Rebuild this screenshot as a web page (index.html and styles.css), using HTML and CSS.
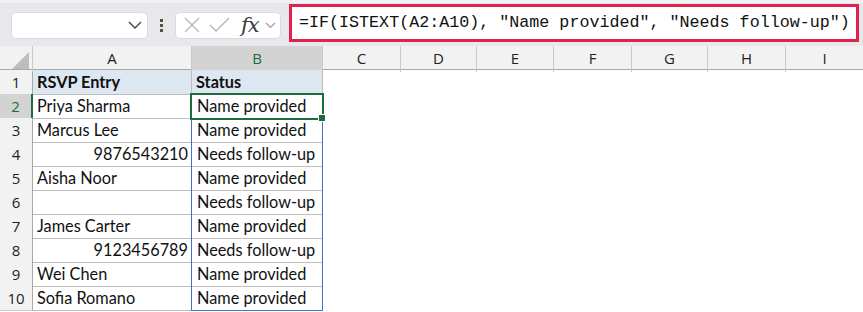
FILE: index.html
```html
<!DOCTYPE html>
<html lang="en">
<head>
    <meta charset="UTF-8">
    <title>RSVP Status</title>
    <link rel="stylesheet" href="styles.css">
</head>
<body>
<div class="toolbar">
    <div class="nameBox">
        <svg class="chev" width="14" height="8" viewBox="0 0 14 8"><path d="M1 1 L7 7 L13 1" fill="none" stroke="#444" stroke-width="1.4"/></svg>
    </div>
    <div class="dots"><span></span><span></span><span></span></div>
    <div class="fxBox">
        <svg width="18" height="18" viewBox="0 0 18 18"><path d="M2 2 L16 16 M16 2 L2 16" stroke="#b5b5b5" stroke-width="1.3" fill="none"/></svg>
        <svg width="21" height="16" viewBox="0 0 21 16"><path d="M1 8 L7 14 L20 1" stroke="#b5b5b5" stroke-width="1.3" fill="none"/></svg>
        <span class="fx">fx</span>
        <svg width="11" height="7" viewBox="0 0 11 7"><path d="M1 1 L5.5 5.5 L10 1" fill="none" stroke="#999" stroke-width="1.2"/></svg>
    </div>
    <div class="formula">=IF(ISTEXT(A2:A10), "Name provided", "Needs follow-up")</div>
</div>
<div class="sheet">
    <div class="row head">
        <div class="corner"><span class="tri"></span></div>
        <div class="colHead">A</div>
        <div class="colHead sel">B</div>
        <div class="colHead">C</div>
        <div class="colHead">D</div>
        <div class="colHead">E</div>
        <div class="colHead">F</div>
        <div class="colHead">G</div>
        <div class="colHead">H</div>
        <div class="colHead last">I</div>
    </div>
    <div class="row">
        <div class="rowHead">1</div>
        <div class="cell title">RSVP Entry</div>
        <div class="cell title b">Status</div>
    </div>
    <div class="row">
        <div class="rowHead sel">2</div>
        <div class="cell">Priya Sharma</div>
        <div class="cell b range active">Name provided</div>
    </div>
    <div class="row">
        <div class="rowHead">3</div>
        <div class="cell">Marcus Lee</div>
        <div class="cell b range">Name provided</div>
    </div>
    <div class="row">
        <div class="rowHead">4</div>
        <div class="cell num">9876543210</div>
        <div class="cell b range">Needs follow-up</div>
    </div>
    <div class="row">
        <div class="rowHead">5</div>
        <div class="cell">Aisha Noor</div>
        <div class="cell b range">Name provided</div>
    </div>
    <div class="row">
        <div class="rowHead">6</div>
        <div class="cell"></div>
        <div class="cell b range">Needs follow-up</div>
    </div>
    <div class="row">
        <div class="rowHead">7</div>
        <div class="cell">James Carter</div>
        <div class="cell b range">Name provided</div>
    </div>
    <div class="row">
        <div class="rowHead">8</div>
        <div class="cell num">9123456789</div>
        <div class="cell b range">Needs follow-up</div>
    </div>
    <div class="row">
        <div class="rowHead">9</div>
        <div class="cell">Wei Chen</div>
        <div class="cell b range">Name provided</div>
    </div>
    <div class="row">
        <div class="rowHead">10</div>
        <div class="cell">Sofia Romano</div>
        <div class="cell b range end">Name provided</div>
    </div>
</div>
</body>
</html>
```
FILE: styles.css
```css
*{
    margin:0px;
    padding:0px;
    box-sizing: border-box;
}
body{
    width:863px;
    height:312px;
    overflow: hidden;
    background-color: #fff;
    font-family: Lato, "Open Sans", sans-serif;
    color:#111;
}
.toolbar{
    height:46px;
    background-color: #e7e8ec;
    border-top:3px solid #f1f1f3;
    display: flex;
    align-items: center;
    padding-left:11px;
}
.toolbar .nameBox{
    width:137px;
    height:27px;
    background-color: #fff;
    border:1px solid #dadbe0;
    border-radius: 5px;
    display: flex;
    align-items: center;
    justify-content: flex-end;
    padding-right:5px;
    margin-top:1px;
}
.toolbar .dots{
    width:27px;
    display: flex;
    flex-direction: column;
    align-items: center;
    gap:2px;
    margin-top:1px;
}
.toolbar .dots span{
    width:3px;
    height:3px;
    background-color: #5a5040;
}
.toolbar .fxBox{
    width:106px;
    height:27px;
    background-color: #fff;
    border:1px solid #dadbe0;
    border-radius: 5px;
    display: flex;
    align-items: center;
    padding-left:7px;
    gap:8px;
    margin-top:1px;
}
.toolbar .fxBox .fx{
    font-family: "DejaVu Serif", "Liberation Serif", serif;
    font-style: italic;
    font-size:21px;
    color:#3a3a3a;
    margin-left:3px;
    margin-right:-2px;
    line-height: 1;
    letter-spacing: -1px;
}
.toolbar .formula{
    margin-left:8px;
    width:570px;
    height:38px;
    margin-top:-3px;
    border:3px solid #e2204d;
    background-color: #fff;
    font-family: "Liberation Mono", "DejaVu Sans Mono", monospace;
    font-size:16.7px;
    color:#111;
    line-height: 32px;
    padding-left:7px;
    white-space: nowrap;
}
.sheet{
    position: relative;
}
.row{
    display: grid;
    grid-template-columns: 33px 159px 131px 78px 76px 77px 78px 76px 78px 77px;
    height:24px;
}
.row.head{
    height:24px;
    background-color: #f2f2f2;
    border-bottom:1px solid #a9a9a9;
}
.corner{
    position: relative;
    border-right:1px solid #c9c9c9;
}
.corner .tri{
    position: absolute;
    right:3px;
    bottom:3px;
    width:0;
    height:0;
    border-left:17px solid transparent;
    border-bottom:17px solid #bdbdbd;
}
.colHead{
    border-right:1px solid #c9c9c9;
    text-align: center;
    font-family: "Open Sans", sans-serif;
    font-size:15px;
    line-height: 24px;
    color:#222;
}
.colHead.last{
    border-right:none;
}
.colHead.sel{
    background-color: #d3d3d3;
    color:#1d6b3c;
    border-bottom:2px solid #1e6b40;
}
.rowHead{
    background-color: #f2f2f2;
    border-right:1px solid #a9a9a9;
    border-bottom:1px solid #c9c9c9;
    text-align: center;
    font-family: "Open Sans", sans-serif;
    font-size:15px;
    line-height: 24px;
    color:#222;
}
.rowHead.sel{
    background-color: #d3d3d3;
    color:#1d6b3c;
    border-right:2px solid #1e6b40;
}
.cell{
    border-right:1px solid #bdbdbd;
    border-bottom:1px solid #bdbdbd;
    font-size:16.3px;
    line-height: 23px;
    padding-left:4px;
    white-space: nowrap;
    position: relative;
}
.cell.num{
    text-align: right;
    padding-right:3px;
}
.cell.title{
    background-color: #dde7f2;
    font-weight: bold;
}
.cell.range{
    border-left:1px solid #4472c4;
    border-right:1px solid #4472c4;
    margin-left:-1px;
    padding-left:5px;
}
.cell.end{
    border-bottom:1px solid #4472c4;
}
.cell.active{
    outline:2px solid #1e6b40;
    outline-offset:-1px;
    z-index: 2;
}
.cell.active::after{
    content:'';
    position: absolute;
    right:-4px;
    bottom:-4px;
    width:6px;
    height:6px;
    background-color: #1e6b40;
    border:1px solid #fff;
}
```
